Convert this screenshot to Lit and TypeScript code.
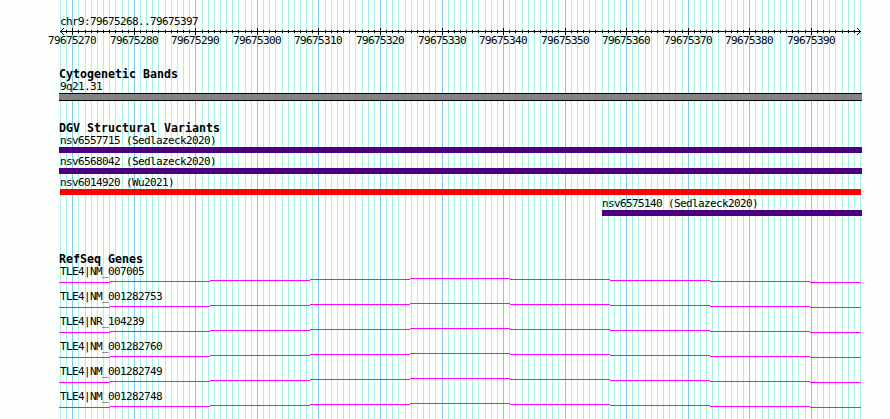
import {LitElement, css, html, svg} from 'lit';
import {customElement} from 'lit/decorators.js';

const START = 79675268;
const BASES = 130;
const WIDTH = 800;

// pixel offset of a base inside the panel
const toX = (i: number) => Math.round((i * WIDTH) / BASES);

interface Variant {
  name: string;
  kind: 'gain' | 'loss';
  left: number;
  width: number;
}

const VARIANTS: Variant[] = [
  {name: 'nsv6557715 (Sedlazeck2020)', kind: 'gain', left: 0, width: 803},
  {name: 'nsv6568042 (Sedlazeck2020)', kind: 'gain', left: 0, width: 803},
  {name: 'nsv6014920 (Wu2021)', kind: 'loss', left: 1, width: 801},
  {name: 'nsv6575140 (Sedlazeck2020)', kind: 'gain', left: 543, width: 260},
];

const GENES = [
  'TLE4|NM_007005',
  'TLE4|NM_001282753',
  'TLE4|NR_104239',
  'TLE4|NM_001282760',
  'TLE4|NM_001282749',
  'TLE4|NM_001282748',
];

@customElement('app-root')
export class AppRoot extends LitElement {
  static styles = css`
    :host {
      display: block;
      position: relative;
      box-sizing: border-box;
      width: 890px;
      height: 419px;
      padding: 15px 28px 0 59px;
      overflow: hidden;
      background: #fcfefc;
      color: #000;
      font-family: 'DejaVu Sans Mono', monospace;
      font-size: 11px;
      letter-spacing: -0.622px;
      line-height: 12px;
    }

    svg {
      display: block;
      overflow: visible;
      shape-rendering: crispEdges;
    }

    .grid {
      position: absolute;
      left: 60px;
      top: 0;
    }

    .minor {
      fill: #acf0ec;
    }

    .major {
      fill: #84caec;
    }

    .content {
      position: relative;
      display: flex;
      flex-direction: column;
    }

    .region,
    .label {
      box-sizing: border-box;
      height: 12px;
      padding: 1px 0 0 1px;
      white-space: nowrap;
    }

    .ruler {
      margin-left: 1px;
      height: 18px;
    }

    .ruler text {
      text-anchor: middle;
    }

    .track {
      display: flex;
      flex-direction: column;
      margin-bottom: 21px;
    }

    .bands {
      margin-top: 23px;
    }

    .variants {
      margin-bottom: 37px;
    }

    .title {
      height: 12px;
      font-size: 11.63px;
      font-weight: bold;
      letter-spacing: 0;
      white-space: nowrap;
    }

    .band {
      box-sizing: border-box;
      height: 8px;
      margin-top: 1px;
      border: solid #000;
      border-width: 1px 0;
      background: #848284;
    }

    .variant {
      height: 21px;
    }

    .variant:last-child {
      height: 19px;
    }

    .inset .label {
      padding-left: 0;
    }

    .bar {
      height: 6px;
      margin-top: 1px;
    }

    .gain {
      background: #4b0082;
    }

    .loss {
      background: #ff0000;
    }

    .gene {
      height: 25px;
    }

    .intron {
      margin-top: 1px;
      fill: #ff00ff;
    }
  `;

  private renderGrid() {
    return html`
      <svg class="grid" width="801" height="419">
        ${Array.from({length: BASES + 1}, (_, i) => svg`
          <rect class=${(START + i) % 10 ? 'minor' : 'major'} x=${toX(i)} y="0" width="1" height="419" />
        `)}
      </svg>
    `;
  }

  private renderTick(i: number) {
    const major = (START + i) % 10 === 0;
    return svg`
      <rect x=${toX(i)} y=${major ? 1 : 3} width="1" height=${major ? 7 : 3} />
      ${major ? svg`<text x=${toX(i)} y="17">${START + i}</text>` : ''}
    `;
  }

  private renderRuler() {
    return html`
      <svg class="ruler" width="801" height="18">
        <rect x="0" y="4" width="801" height="1" />
        ${Array.from({length: BASES - 1}, (_, i) => this.renderTick(i + 1))}
        <path d="M0 4h1v1h-1zM1 3h1v3h-1zM2 2h1v1h-1zM2 6h1v1h-1zM3 1h1v1h-1zM3 7h1v1h-1z" />
        <path d="M800 4h1v1h-1zM799 3h1v3h-1zM798 2h1v1h-1zM798 6h1v1h-1zM797 1h1v1h-1zM797 7h1v1h-1z" />
      </svg>
    `;
  }

  private renderVariant(v: Variant) {
    return html`
      <div class="variant ${v.left ? 'inset' : ''}" style="margin-left: ${v.left}px; width: ${v.width}px">
        <div class="label">${v.name}</div>
        <div class="bar ${v.kind}"></div>
      </div>
    `;
  }

  // the intron arch is so wide that it shows as one pixel steps
  private renderGene(name: string) {
    const edges = [0, 51, 151, 251, 351, 451, 551, 651, 751, 802];
    return html`
      <div class="gene">
        <div class="label">${name}</div>
        <svg class="intron" width="802" height="5">
          ${edges.slice(0, -1).map((x, i) => svg`
            <rect x=${x} y=${Math.abs(4 - i)} width=${edges[i + 1] - x} height="1" />
          `)}
        </svg>
      </div>
    `;
  }

  render() {
    return html`
      ${this.renderGrid()}
      <div class="content">
        <div class="region">chr9:79675268..79675397</div>
        ${this.renderRuler()}
        <div class="track bands">
          <div class="title">Cytogenetic Bands</div>
          <div class="label">9q21.31</div>
          <div class="band"></div>
        </div>
        <div class="track variants">
          <div class="title">DGV Structural Variants</div>
          ${VARIANTS.map((v) => this.renderVariant(v))}
        </div>
        <div class="track">
          <div class="title">RefSeq Genes</div>
          ${GENES.map((name) => this.renderGene(name))}
        </div>
      </div>
    `;
  }
}
